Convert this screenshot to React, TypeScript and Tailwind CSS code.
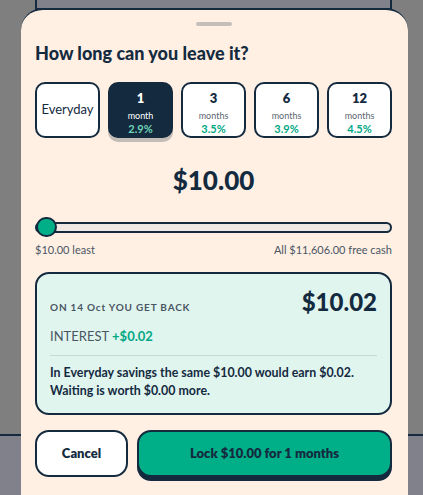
import { useState } from "react";

const terms = [
  { key: "everyday", label: "Everyday" },
  { key: "1", num: "1", unit: "month", rate: "2.9%" },
  { key: "3", num: "3", unit: "months", rate: "3.5%" },
  { key: "6", num: "6", unit: "months", rate: "3.9%" },
  { key: "12", num: "12", unit: "months", rate: "4.5%" },
];

function TermOption({ term, active, onClick }: { term: (typeof terms)[number]; active: boolean; onClick: () => void }) {
  if (!term.num) {
    return (
      <button
        onClick={onClick}
        className="h-[56px] rounded-[10px] border-2 border-[#142a3f] bg-white text-[13px] text-[#142a3f] flex items-center justify-center"
      >
        {term.label}
      </button>
    );
  }
  return (
    <button
      onClick={onClick}
      className={
        active
          ? "h-[56px] rounded-[10px] border-2 border-[#142a3f] bg-[#142a3f] shadow-[0_4px_0_#c3bdb7] flex flex-col items-center pt-[6px]"
          : "h-[56px] rounded-[10px] border-2 border-[#142a3f] bg-white flex flex-col items-center pt-[6px]"
      }
    >
      <span className={active ? "text-[13px] leading-[16px] font-extrabold text-white" : "text-[13px] leading-[16px] font-extrabold text-[#142a3f]"}>
        {term.num}
      </span>
      <span className={active ? "mt-[4px] text-[9px] leading-[12px] text-white" : "mt-[4px] text-[9px] leading-[12px] text-[#5b6570]"}>
        {term.unit}
      </span>
      <span className={active ? "text-[11px] leading-[14px] font-bold text-[#6fd6b6]" : "text-[11px] leading-[14px] font-bold text-[#00a884]"}>
        {term.rate}
      </span>
    </button>
  );
}

export default function App() {
  const [selected, setSelected] = useState("1");

  return (
    <div className="relative w-[423px] h-[495px] overflow-hidden bg-[#7f7f7f]" style={{ fontFamily: "Lato, 'Noto Sans', sans-serif" }}>
      {/* page behind the overlay */}
      <div className="absolute left-[35px] top-0 w-[357px] h-[10px] bg-[#80818a] border-x-2 border-b-2 border-[#142a3f]" />
      <div className="absolute left-0 right-0 top-[434px] bottom-0 bg-[#80818a] border-t-2 border-[#142a3f]" />

      {/* sheet */}
      <div className="relative ml-[21px] mt-[8px] w-[387px] h-[487px] rounded-t-[22px] border-t-2 border-[#142a3f] bg-[#fff0e3] pl-[14px] pr-[16px] flex flex-col">
        <div className="mx-auto mt-[12px] h-[4px] w-[36px] rounded-full bg-[#c4bfba]" />

        <h2 className="mt-[15px] text-[18px] leading-[24px] font-black text-[#142a3f]">How long can you leave it?</h2>

        <div className="mt-[17px] grid grid-cols-5 gap-[8px]">
          {terms.map((t) => (
            <TermOption key={t.key} term={t} active={selected === t.key} onClick={() => setSelected(t.key)} />
          ))}
        </div>

        <div className="mt-[26px] text-center text-[26px] leading-[32px] font-black text-[#142a3f]">$10.00</div>

        <div className="mt-[21px] relative h-[20px] flex items-center">
          <div className="w-full h-[11px] rounded-full border-2 border-[#142a3f] bg-[#f0e9e3]" />
          <div className="absolute left-[1px] top-0 w-[21px] h-[20px] rounded-full border-2 border-[#142a3f] bg-[#00ae88]" />
        </div>

        <div className="mt-[5px] flex justify-between text-[11px] leading-[16px] text-[#4a5563]">
          <span>$10.00 least</span>
          <span>All $11,606.00 free cash</span>
        </div>

        <div className="mt-[14px] rounded-[14px] border-2 border-[#142a3f] bg-[#e1f5ef] px-[13px] pt-[14px] pb-[13px]">
          <div className="flex items-baseline justify-between">
            <span className="text-[10px] font-bold tracking-[0.8px] text-[#4a5563]">ON 14 Oct YOU GET BACK</span>
            <span className="text-[24px] leading-[28px] font-black text-[#142a3f]">$10.02</span>
          </div>
          <div className="mt-[11px] text-[13px] leading-[18px] text-[#4a5563]">
            INTEREST <span className="font-bold text-[#00a884]">+$0.02</span>
          </div>
          <div className="mt-[10px] h-px bg-[#c3ddd5]" />
          <p className="mt-[8px] text-[12.4px] leading-[18px] font-bold text-[#142a3f]">
            In Everyday savings the same $10.00 would earn $0.02.
            <br />
            Waiting is worth $0.00 more.
          </p>
        </div>

        <div className="mt-[15px] flex gap-[9px]">
          <button className="w-[93px] h-[47px] rounded-[14px] border-2 border-[#142a3f] bg-white text-[13px] font-extrabold text-[#142a3f]">
            Cancel
          </button>
          <button className="flex-1 h-[47px] rounded-[14px] border-2 border-[#142a3f] bg-[#00ae88] shadow-[0_4px_0_#142a3f] text-[13px] font-extrabold text-[#142a3f]">
            Lock $10.00 for 1 months
          </button>
        </div>
      </div>
    </div>
  );
}
